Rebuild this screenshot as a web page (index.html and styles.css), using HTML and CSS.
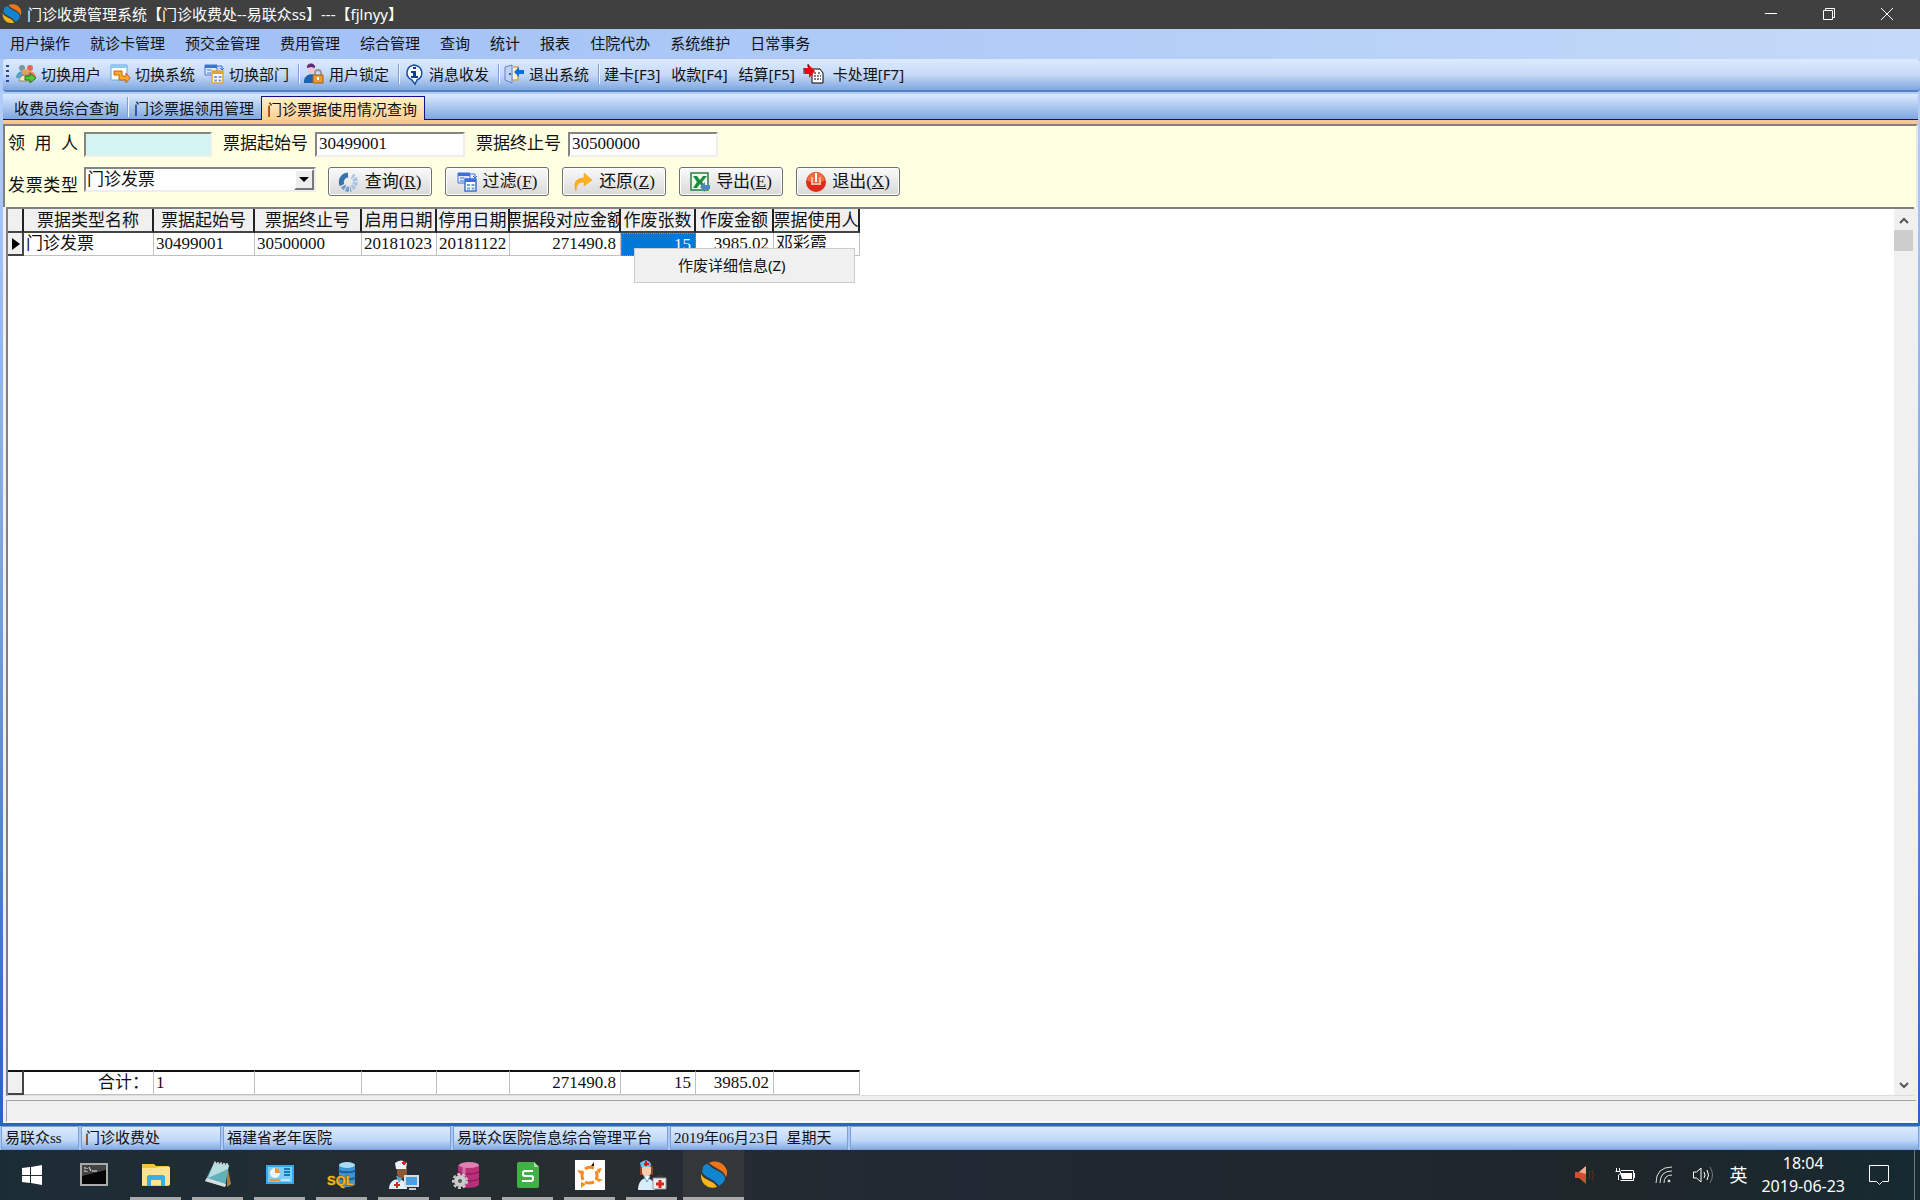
FILE: index.html
```html
<!DOCTYPE html>
<html lang="zh-CN">
<head>
	<meta charset="utf-8">
	<title>门诊收费管理系统</title>
	<link rel="stylesheet" href="styles.css">
</head>
<body>
	<!-- 公用图标 -->
	<svg class="defs" width="0" height="0">
		<symbol id="logo" viewBox="0 0 28 28">
			<path d="M9 2C14-1 24 0 27 10c0 3 0 4-1 6C24 9 16 8 9 2z" fill="#ee7415"/>
			<path d="M3 6C4 4 6 3 8 3c5 7 15 6 17 14 0 3-3 6-6 8C15 18 5 17 2 11z" fill="#1185d0"/>
			<path d="M1 13c3 7 13 6 16 13C9 29 0 23 1 13z" fill="#f5b517"/>
		</symbol>
		<symbol id="calendar" viewBox="0 0 20 20">
			<path d="M1 1h12v10H1z" fill="#dce9ff" stroke="#4474d6"/>
			<path d="M1 1h12v3H1z" fill="#3d6fd8"/>
			<path d="M3 6h4M3 9h4" stroke="#4474d6"/>
			<path d="M14 2h4v3m-2-1l2 2 2-2" fill="none" stroke="#3d6fd8"/>
			<path d="M8 7h11v12H8z" fill="#fff" stroke="currentColor" stroke-width="1.5"/>
			<path d="M8 7h11v3H8z" fill="currentColor"/>
			<path d="M10 12h3v2h-3zM14.500 12h3v2h-3zM10 15.500h3v2h-3zM14.500 15.500h3v2h-3z" fill="#6f9be8"/>
		</symbol>
	</svg>

	<header class="titlebar">
		<svg class="title_icon"><use href="#logo"/></svg>
		<h1>门诊收费管理系统【门诊收费处--易联众ss】---【fjlnyy】</h1>
		<div class="win_btns">
			<button type="button" aria-label="最小化"><svg width="12" height="12"><path d="M0 5.500h12"/></svg></button>
			<button type="button" aria-label="还原"><svg width="12" height="12"><path d="M.5 2.500h9v9h-9zM2.500 2.500v-2h9v9h-2"/></svg></button>
			<button type="button" aria-label="关闭"><svg width="12" height="12"><path d="M0 0l12 12M12 0L0 12"/></svg></button>
		</div>
	</header>

	<nav class="menubar">
		<button type="button">用户操作</button>
		<button type="button">就诊卡管理</button>
		<button type="button">预交金管理</button>
		<button type="button">费用管理</button>
		<button type="button">综合管理</button>
		<button type="button">查询</button>
		<button type="button">统计</button>
		<button type="button">报表</button>
		<button type="button">住院代办</button>
		<button type="button">系统维护</button>
		<button type="button">日常事务</button>
	</nav>

	<div class="toolbar">
		<span class="grip"></span>
		<button type="button">
			<svg viewBox="0 0 20 20"><circle cx="6" cy="4" r="3" fill="#7e93a8"/><path d="M0 14c0-9 12-9 12 0z" fill="#5aa3c8"/><circle cx="14" cy="4" r="3" fill="#e2694f"/><path d="M8 14c0-9 12-9 12 0z" fill="#f08068"/><circle cx="9" cy="8" r="3" fill="#e5a35c"/><path d="M3 17c1-8 11-8 12 0z" fill="#f7e6cb" stroke="#99845e"/><path d="M9 12h5V9l6 5-6 5v-3H9z" fill="#54c832" stroke="#24731b"/></svg>
			切换用户</button>
		<button type="button">
			<svg viewBox="0 0 20 20"><path d="M1 1h16v15H1z" fill="#fff" stroke="#64a7de"/><path d="M1 1h16v3H1z" fill="#8ccaf0"/><path d="M4 7h8v5h4V9l4 5-4 5v-3H9v-5H4z" fill="#ffa928" stroke="#c86412"/></svg>
			切换系统</button>
		<button type="button">
			<svg class="orange"><use href="#calendar"/></svg>
			切换部门</button>
		<span class="sep"></span>
		<button type="button">
			<svg viewBox="0 0 20 20"><path d="M4 3c0-4 7-4 7 0v4c0 3-7 3-7 0z" fill="#ecc6d8"/><path d="M3 4c-1-6 9-6 8 0L7 3z" fill="#5c2d70"/><path d="M0 18c0-10 14-10 15-1v2H0z" fill="#1c63ae"/><path d="M11 12V9c0-4 6-4 6 0v3" fill="none" stroke="#999" stroke-width="2"/><path d="M9 11h10v8H9z" fill="#e99b32" stroke="#a9600f"/><path d="M13 13h2v3h-2z" fill="#fff"/></svg>
			用户锁定</button>
		<span class="sep"></span>
		<button type="button">
			<svg viewBox="0 0 20 20"><path d="M10 1a9 8 0 0 1 3 15l-2 4-3-4A9 8 0 0 1 10 1z" fill="#fff" stroke="#1450a4" stroke-width="1.500"/><path d="M9 3h3v2H9zM7 7h5v5h2v2H7v-2h2V9H7z" fill="#0b3f91"/></svg>
			消息收发</button>
		<span class="sep"></span>
		<button type="button">
			<svg viewBox="0 0 20 20"><path d="M9 3h5v13H9" fill="#fff3c9" stroke="#d1a55f" stroke-width="1.500"/><path d="M1 3l7-2v18l-7-3z" fill="#bfd3f6" stroke="#6c80bf"/><circle cx="6" cy="10" r="1" fill="#345"/><path d="M10 8l5-5v3h5v4h-5v3z" fill="#0b6fd5"/></svg>
			退出系统</button>
		<span class="sep"></span>
		<button type="button" class="plain">建卡[F3]</button>
		<button type="button" class="plain">收款[F4]</button>
		<button type="button">结算[F5]</button>
		<button type="button" class="last">
			<svg viewBox="0 0 20 20"><path d="M8 5h8l3 4v10H8z" fill="#fff" stroke="#000"/><path d="M10 9h2m2 0h2M10 12h7M10 15h7" stroke="#000" stroke-dasharray="2 1"/><path d="M0 4h4V0l7 7-6 7v-4H1z" fill="#f00010"/><path d="M0 4v6M4 0v3" stroke="#222"/></svg>
			卡处理[F7]</button>
	</div>

	<main class="workspace">
		<div class="tabs" role="tablist">
			<button type="button" role="tab">收费员综合查询</button>
			<span class="sep"></span>
			<button type="button" role="tab">门诊票据领用管理</button>
			<button type="button" role="tab" class="tab_on" aria-selected="true">门诊票据使用情况查询</button>
		</div>

		<section class="pane">
			<form class="filter">
				<div class="row">
					<label class="caption" for="owner">领 用 人</label>
					<input class="owner" id="owner" type="text">
					<label for="start">票据起始号</label>
					<input id="start" type="text" value="30499001">
					<label for="end">票据终止号</label>
					<input id="end" type="text" value="30500000">
				</div>
				<div class="row row_btns">
					<label class="caption" for="kind">发票类型</label>
					<div class="combo">
						<select id="kind"><option>门诊发票</option></select>
						<span class="combo_arrow"></span>
					</div>
					<button type="button">
						<svg viewBox="0 0 20 20" fill="none" stroke-width="5"><path d="M9 3a7 7 0 0 0-6 10" stroke="#3672ab"/><path d="M4 14a7 7 0 0 0 8 3" stroke="#6f9fd0" stroke-dasharray="3 1"/><path d="M13 16a7 7 0 0 0 0-12" stroke="#a9c4e8" stroke-dasharray="3 1"/></svg>
						<span>查询(<u>R</u>)</span></button>
					<button type="button">
						<svg class="blue"><use href="#calendar"/></svg>
						<span>过滤(<u>F</u>)</span></button>
					<button type="button">
						<svg viewBox="0 0 20 20"><path d="M3 19C0 11 3 6 11 6V1l8 7-8 6v-4c-5 0-8 3-8 9z" fill="#fbb21c" stroke="#e79b12" stroke-width=".5"/></svg>
						<span>还原(<u>Z</u>)</span></button>
					<button type="button">
						<svg viewBox="0 0 20 20"><path d="M1 1h17v17H1z" fill="#eef8ee" stroke="#2e7b42" stroke-width="1.500"/><path d="M3 4h4l3 4 3-4h4l-5 6 5 6h-4l-3-4-3 4H3l4-6z" fill="#1f8a3b"/><path d="M10 15l5-5v3h5v4h-5v3z" fill="#4c86c6"/></svg>
						<span>导出(<u>E</u>)</span></button>
					<button type="button">
						<svg viewBox="0 0 20 20"><circle cx="10" cy="10" r="10" fill="#dc2a16"/><path d="M1 8c2-11 16-11 18 0-4 4-14 4-18 0z" fill="#f26a3c"/><path d="M6 5v7h8V5" fill="none" stroke="#ffb9a0" stroke-width="2"/><path d="M10 1v9" stroke="#fff" stroke-width="2"/></svg>
						<span>退出(<u>X</u>)</span></button>
				</div>
			</form>

			<div class="grid_box">
				<div class="grid_body">
					<table class="grid">
						<colgroup><col class="c_mark"><col class="c_type"><col class="c_start"><col class="c_end"><col class="c_on"><col class="c_off"><col class="c_sum"><col class="c_count"><col class="c_void"><col class="c_user"></colgroup>
						<thead>
							<tr>
								<th></th>
								<th><div>票据类型名称</div></th>
								<th><div>票据起始号</div></th>
								<th><div>票据终止号</div></th>
								<th><div>启用日期</div></th>
								<th><div>停用日期</div></th>
								<th><div>票据段对应金额</div></th>
								<th><div>作废张数</div></th>
								<th><div>作废金额</div></th>
								<th><div>票据使用人</div></th>
							</tr>
						</thead>
						<tbody>
							<tr>
								<td class="mark"><svg width="8" height="12"><path d="M0 0l8 6-8 6z"/></svg></td>
								<td>门诊发票</td>
								<td>30499001</td>
								<td>30500000</td>
								<td>20181023</td>
								<td>20181122</td>
								<td class="num">271490.8</td>
								<td class="num cell_on">15
									<div class="popup" role="menu"><button type="button" role="menuitem">作废详细信息(Z)</button></div>
								</td>
								<td class="num">3985.02</td>
								<td>邓彩霞</td>
							</tr>
						</tbody>
					</table>
					<table class="grid grid_total">
						<colgroup><col class="c_mark"><col class="c_type"><col class="c_start"><col class="c_end"><col class="c_on"><col class="c_off"><col class="c_sum"><col class="c_count"><col class="c_void"><col class="c_user"></colgroup>
						<tbody>
							<tr>
								<td class="mark"></td>
								<td class="num">合计：</td>
								<td>1</td>
								<td></td>
								<td></td>
								<td></td>
								<td class="num">271490.8</td>
								<td class="num">15</td>
								<td class="num">3985.02</td>
								<td></td>
							</tr>
						</tbody>
					</table>
				</div>
				<div class="scroll">
					<svg width="10" height="7"><path d="M1 6l4-4 4 4"/></svg>
					<span class="thumb"></span>
					<svg class="down" width="10" height="7"><path d="M1 1l4 4 4-4"/></svg>
				</div>
			</div>
			<div class="hint"></div>
		</section>
	</main>

	<footer class="status">
		<span class="st_user">易联众ss</span>
		<span class="st_dept">门诊收费处</span>
		<span class="st_hosp">福建省老年医院</span>
		<span class="st_sys">易联众医院信息综合管理平台</span>
		<span class="st_date">2019年06月23日&nbsp; 星期天</span>
		<span class="st_rest"></span>
	</footer>

	<div class="taskbar">
		<button type="button" aria-label="开始"><svg width="20" height="20" fill="#fff"><path d="M0 3l8-1v8H0zM9 2l11-2v10H9zM0 11h8v7l-8-1zM9 11h11v9L9 18z"/></svg></button>
		<button type="button" aria-label="命令提示符"><svg width="28" height="24"><path d="M1 1h26v21H1z" fill="#050505" stroke="#aaa" stroke-width="2"/><path d="M2 2h24v5L2 13z" fill="#444"/><path d="M4 5h2M4 8h2M7 5v1M7 8v1M9 4l2 4M12 8h5" stroke="#eee"/></svg></button>
		<button type="button" class="run" aria-label="资源管理器"><svg width="28" height="24"><path d="M0 1h12l2 2h13v20H0z" fill="#f6c33c"/><path d="M0 5h14l2-1h12v18H0z" fill="#ffe392"/><path d="M5 23V14q0-2 2-2h14q2 0 2 2v9h-4v-6H9v6z" fill="#3baee5"/></svg></button>
		<button type="button" class="run" aria-label="记事本"><svg width="28" height="28"><path d="M23 3l4 20-4 3z" fill="#a47d45"/><path d="M10 2l15 2-4 22L1 20z" fill="#62b2bd"/><path d="M10 2l15 2-1 4L4 17z" fill="#b8dde0"/><path d="M1 20l20 6 1-3L3 17z" fill="#ddd"/><path d="M10 2l15 2" stroke="#ccc" stroke-width="3" stroke-dasharray="2 1"/></svg></button>
		<button type="button" class="run" aria-label="控制面板"><svg width="28" height="20"><path d="M0 0h28v19H0z" fill="#37a8ea"/><path d="M2 2h24v15H2z" fill="#7ccdf8"/><circle cx="9" cy="8" r="5" fill="#e9f8ff"/><path d="M9 8V3a5 5 0 0 1 5 5z" fill="#f3952b"/><path d="M18 4h6M18 7h6M18 10h6" stroke="#1677bd" stroke-width="2"/><path d="M4 15h10" stroke="#f3952b" stroke-width="2"/><path d="M15 15h9" stroke="#fff"/></svg></button>
		<button type="button" class="run" aria-label="SQL"><svg width="30" height="28"><path d="M12 4v19c0 4 16 4 16 0V4z" fill="#3f93d2"/><path d="M12 9c0 3 16 3 16 0M12 16c0 3 16 3 16 0" fill="none" stroke="#1a5c96" stroke-width="2"/><ellipse cx="20" cy="4" rx="8" ry="3" fill="#a6dcf5"/><text x="0" y="24" class="sql">SQL</text></svg></button>
		<button type="button" class="run" aria-label="医生工作站"><svg width="30" height="30"><path d="M0 29c0-13 18-13 18 0z" fill="#e4f0f7"/><path d="M7 16l3 7 4-6z" fill="#5aa9dd"/><path d="M8 8h10v5c0 7-10 7-10 0z" fill="#8b5a36"/><path d="M6 3q6-5 12 0l-1 6H7z" fill="#edf3f8"/><path d="M13 3h4m-2-2v4M5 25h6m-3-3v6" stroke="#d22" stroke-width="2"/><path d="M16 16h13v10H16z" fill="#4a9de0" stroke="#d7dde2" stroke-width="2"/><path d="M20 29h7" stroke="#ccc" stroke-width="2"/></svg></button>
		<button type="button" class="run" aria-label="数据库配置"><svg width="28" height="28"><path d="M6 4v19c0 5 21 5 21 0V4z" fill="#b92f7a"/><path d="M6 10c0 4 21 4 21 0M6 17c0 4 21 4 21 0" fill="none" stroke="#7b174d"/><path d="M12 6v20" stroke="#dd6fa9" stroke-width="3"/><ellipse cx="17" cy="4" rx="10" ry="3" fill="#df81b2"/><circle cx="8" cy="20" r="6" fill="#ccc"/><circle cx="8" cy="20" r="7" fill="none" stroke="#ccc" stroke-width="2" stroke-dasharray="3 2"/><circle cx="8" cy="20" r="2" fill="#555"/></svg></button>
		<button type="button" class="run" aria-label="表格"><svg width="22" height="26"><path d="M2 0h15l5 5v19q0 2-2 2H2q-2 0-2-2V2q0-2 2-2z" fill="#41b045"/><path d="M17 0l5 5h-5z" fill="#a6dda6"/><path d="M16 9H8q-2 0-2 2v1q0 2 2 2h6q2 0 2 2v1q0 2-2 2H5" fill="none" stroke="#fff" stroke-width="2"/></svg></button>
		<button type="button" class="run" aria-label="工具"><svg width="30" height="30"><path d="M0 0h30v30H0z" fill="#fff"/><g fill="none" stroke="#f58a1f" stroke-width="3"><path d="M10 9q4-3 9-1M21 11q2 5 0 9M19 22q-5 2-9 0M8 20q-2-5 0-9"/></g><path d="M2 10l6 1-3 3zM22 18l6 2-5 2zM6 22l5 2-5 4zM22 9l5-1-3 6z" fill="#f58a1f"/><path d="M16 6l3-4v4z" fill="#111"/></svg></button>
		<button type="button" class="run" aria-label="护士工作站"><svg width="30" height="30"><path d="M1 30c0-16 17-16 17 0z" fill="#d9ecfa"/><path d="M7 16l3 6 3-6" fill="#fff" stroke="#5ba2d8"/><path d="M3 8c0-5 13-5 13 0v7H3z" fill="#8f4423"/><path d="M5 8c0-4 9-4 9 0v4c0 6-9 6-9 0z" fill="#f8cfae"/><path d="M3 3q7-6 11 1l-1 3H4z" fill="#7fb8e8"/><path d="M7 4h5M9 1v5" stroke="#d11" stroke-width="2"/><path d="M16 18h13v11H16z" fill="#eee" stroke="#999"/><path d="M20 18v-2h6v2" fill="none" stroke="#444"/><path d="M19 24h8M23 20v8" stroke="#d22" stroke-width="3"/></svg></button>
		<button type="button" class="run run_on" aria-label="门诊收费管理系统"><svg width="28" height="28"><use href="#logo"/></svg></button>

		<div class="tray">
			<svg width="20" height="20"><path d="M0 7h4l7-6v18l-7-6H0z" fill="#cf4f32"/><path d="M4 7l7-6v8z" fill="#efa893"/><path d="M14 6q2 4 0 8M17 5q3 5 0 10" fill="none" stroke="#6a2a1b"/></svg>
			<svg width="20" height="14"><path d="M5 5h12v6H7z" fill="#fff"/><path d="M6 2.500h12.500v10H5.500M19.500 5v5M1.500 0v3M4.500 0v3M.5 3.500h5v2l-2 1.500v5" fill="none" stroke="#fff"/></svg>
			<svg width="18" height="18" fill="none" stroke="#ddd"><path d="M1 17Q1 1 17 1M5 17Q5 5 17 5M9 17Q9 9 17 9"/><circle cx="14" cy="15" r="1" fill="#fff"/></svg>
			<svg width="20" height="18" fill="none" stroke="#fff"><path d="M.5 6h3L8 2v14l-4.500-4H.5zM11 6q2 3 0 6M14 4q3 5 0 10"/><path d="M17 1q5 8 0 16" stroke="#777"/></svg>
			<span class="ime">英</span>
			<div class="clock"><time>18:04</time><time>2019-06-23</time></div>
			<svg class="notice" width="20" height="20"><path d="M.5.5h19v16h-6l-3 3-3-3h-7z" fill="none" stroke="#fff"/></svg>
		</div>
	</div>
</body>
</html>
```
FILE: styles.css
```css
*{
	box-sizing: border-box;
}
body{
	margin: 0;
	height: 100vh;
	display: flex;
	flex-direction: column;
	overflow: hidden;
	background: linear-gradient(#a8c5f7, #b0cdfa 10%, #7ea5e6 45%, #2c62c9 93%);
	font-family: "Noto Sans", "Noto Sans CJK SC", sans-serif;
	font-size: 15px;
	line-height: 20px;
	color: #111;
}
button, input, select{
	font: inherit;
	color: inherit;
	border: 0;
	padding: 0;
	background: none;
	white-space: nowrap;
}
svg{
	flex: none;
	overflow: visible;
}
.defs{
	position: absolute;
}

/* 标题栏 */
.titlebar{
	flex: none;
	height: 29px;
	display: flex;
	align-items: center;
	padding: 0 4px 2px 2px;
	background: #404040;
	color: #fff;
}
.title_icon{
	width: 20px;
	height: 20px;
}
.titlebar h1{
	margin: 0 auto 0 5px;
	font-size: 15px;
	font-weight: normal;
}
.win_btns{
	display: flex;
}
.win_btns button{
	width: 58px;
	height: 27px;
	display: flex;
	align-items: center;
	justify-content: center;
}
.win_btns path{
	fill: none;
	stroke: #fff;
}

/* 菜单和工具栏 */
.menubar{
	flex: none;
	height: 30px;
	display: flex;
	align-items: center;
	gap: 20px;
	padding: 0 0 2px 10px;
	background: linear-gradient(90deg, #9dbdf5, #c4daf8);
}
.toolbar{
	flex: none;
	height: 33px;
	display: flex;
	align-items: center;
	margin-left: 3px;
	padding: 0 0 2px 3px;
	border-bottom: 2px solid #5580bd;
	border-radius: 4px;
	background: linear-gradient(#dceaff, #c6daf7 50%, #7fa7e1);
}
.grip{
	width: 3px;
	height: 18px;
	margin-right: 7px;
	background: repeating-linear-gradient(#27479a 0 2px, transparent 2px 5px);
}
.toolbar button{
	display: flex;
	align-items: center;
	gap: 5px;
	margin-right: 9px;
}
.toolbar button.plain{
	margin-right: 11px;
}
.toolbar svg{
	width: 20px;
	height: 20px;
}
.toolbar .last{
	gap: 9px;
}
.orange{
	color: #e8a13a;
}
.blue{
	color: #3d6fd8;
}
.sep{
	width: 2px;
	height: 20px;
	margin-right: 4px;
	border-left: 1px solid #7d9fd8;
	background: #f0f6ff;
}

/* 页签 */
.workspace{
	flex: 1;
	min-height: 0;
	display: flex;
	flex-direction: column;
	padding: 2px 2px 3px 3px;
}
.tabs{
	flex: none;
	height: 26px;
	display: flex;
	align-items: flex-end;
	padding-left: 11px;
	border-bottom: 1px solid #10108a;
	background: linear-gradient(#dceaff, #7fa7e1);
}
.tabs button{
	height: 22px;
	line-height: 22px;
}
.tabs .sep{
	margin: 0 5px 2px 8px;
}
.tabs .tab_on{
	height: 24px;
	margin: 0 0 -1px 7px;
	padding: 0 7px 0 5px;
	border: 1px solid #10108a;
	border-bottom: 0;
	background: linear-gradient(#fff0cc, #ffd096);
}

/* 查询条件 */
.pane{
	flex: 1;
	min-height: 0;
	display: flex;
	flex-direction: column;
	border-top: 4px solid #f6c795;
	background: #f0f0f0;
	font-family: "Liberation Serif", "Noto Sans CJK SC", serif;
	font-size: 17px;
}
.filter{
	padding: 5px 2px 11px 3px;
	border: 2px solid #808080;
	border-right-color: #e8e8e8;
	border-bottom: 0;
	background: #ffffe1;
}
.row{
	display: flex;
	align-items: center;
	height: 26px;
}
.row_btns{
	height: 29px;
	margin-top: 10px;
}
.row label{
	flex: none;
	width: 87px;
	margin: 0 5px 0 11px;
}
.row .caption{
	width: 70px;
	margin: 0 6px 0 0;
	text-align-last: justify;
}
.row_btns .caption{
	align-self: flex-end;
}
.row input, .combo{
	height: 25px;
	border: 2px solid #858585;
	border-right-color: #eee;
	border-bottom-color: #eee;
	background: #fff;
}
.row input{
	width: 150px;
	padding-left: 2px;
}
.row input.owner{
	width: 128px;
	background: #d2f4f2;
}
.combo{
	position: relative;
	align-self: flex-start;
	width: 232px;
	margin-right: 12px;
}
.combo select{
	display: block;
	width: 100%;
	height: 21px;
	padding-left: 1px;
	appearance: none;
}
.combo_arrow{
	position: absolute;
	top: 0;
	right: 0;
	width: 20px;
	height: 21px;
	border: 2px solid #fff;
	border-right-color: #777;
	border-bottom-color: #777;
	background: #eee;
	pointer-events: none;
}
.combo_arrow::after{
	content: "";
	display: block;
	margin: 6px 3px;
	border: 5px solid transparent;
	border-top-color: #000;
}
.row_btns button{
	display: flex;
	align-items: center;
	justify-content: center;
	gap: 6px;
	width: 104px;
	height: 29px;
	margin-right: 13px;
	border: 1px solid #707070;
	border-radius: 3px;
	background: linear-gradient(#fafafa, #d9d9d9);
	box-shadow: inset 0 0 0 1px #fff;
}
.row_btns svg{
	width: 20px;
	height: 20px;
}

/* 表格 */
.grid_box{
	flex: 1;
	min-height: 0;
	display: flex;
	margin: 0 4px 0 3px;
	border: 2px solid #808080;
	border-right: 0;
	border-bottom: 1px solid #ddd;
	background: #fff;
}
.grid_body{
	flex: 1;
	display: flex;
	flex-direction: column;
	justify-content: space-between;
}
.grid{
	width: 852px;
	table-layout: fixed;
	border-collapse: separate;
	border-spacing: 0;
}
.c_mark{ width: 16px; }
.c_type{ width: 130px; }
.c_start{ width: 101px; }
.c_end{ width: 107px; }
.c_on, .c_count{ width: 75px; }
.c_off{ width: 73px; }
.c_sum{ width: 111px; }
.c_void{ width: 78px; }
.c_user{ width: 86px; }
.grid th{
	height: 24px;
	padding: 2px 0 0;
	border-right: 2px solid #222;
	border-bottom: 2px solid #444;
	background: #f0f0f0;
	font-weight: normal;
}
.grid th div{
	display: flex;
	justify-content: center;
	overflow: hidden;
	white-space: nowrap;
}
.grid td{
	height: 23px;
	padding: 0 0 0 2px;
	border-right: 1px solid #c0c0c0;
	border-bottom: 1px solid #c0c0c0;
	white-space: nowrap;
}
.grid .num{
	padding-right: 4px;
	text-align: right;
}
.grid .mark{
	padding-left: 4px;
	border-right: 2px solid #444;
	border-bottom: 2px solid #444;
	background: #f0f0f0;
}
.grid .mark svg{
	display: block;
}
.grid .cell_on{
	position: relative;
	border: 1px dotted #e8801c;
	background: #0078d7;
	color: #fff;
}
.grid_total td{
	height: 25px;
	border-top: 2px solid #111;
}
.popup{
	position: absolute;
	top: 14px;
	left: 12px;
	z-index: 1;
	width: 221px;
	border: 1px solid #ccc;
	background: #f0f0f0;
	color: #111;
}
.popup button{
	display: block;
	width: 100%;
	height: 33px;
	padding: 0 0 2px 43px;
	text-align: left;
	font-family: "Noto Sans", "Noto Sans CJK SC", sans-serif;
	font-size: 15px;
}
.scroll{
	width: 20px;
	display: flex;
	flex-direction: column;
	align-items: center;
	padding: 8px 1px 6px 0;
	background: #f0f0f0;
}
.scroll path{
	fill: none;
	stroke: #555;
	stroke-width: 2;
}
.thumb{
	width: 100%;
	height: 21px;
	margin: 6px 0 auto;
	background: #cdcdcd;
}
.hint{
	flex: none;
	height: 22px;
	margin: 4px 2px 1px 3px;
	border: 1px solid #a0a0a0;
	border-right: 0;
	border-bottom-color: #fff;
}

/* 状态栏 */
.status{
	flex: none;
	height: 24px;
	display: flex;
	gap: 2px;
	padding: 0 1px;
	background: #a9c8f5;
	font-family: "Liberation Serif", "Noto Sans CJK SC", serif;
}
.status span{
	height: 24px;
	padding-left: 3px;
	border: 1px solid #7d9fd3;
	background: linear-gradient(#dceaff, #c0d8f8 60%, #86ade4);
	line-height: 22px;
	white-space: nowrap;
}
.st_user{ width: 78px; }
.st_dept{ width: 140px; }
.st_hosp{ width: 228px; }
.st_sys{ width: 215px; }
.st_date{ width: 178px; }
.st_rest{ flex: 1; }

/* 任务栏 */
.taskbar{
	flex: none;
	height: 50px;
	display: flex;
	gap: 11px;
	padding: 0 5px 0 6px;
	background: linear-gradient(90deg, #1c2c36, #272d30 30%, #222833 50%, #1e262a 85%, #172a31);
	color: #fff;
}
.taskbar button{
	width: 51px;
	display: flex;
	align-items: center;
	justify-content: center;
	padding-top: 2px;
	border-bottom: 3px solid transparent;
}
.taskbar .run{
	border-bottom-color: #aaa;
}
.taskbar .run_on{
	width: 61px;
	margin-left: -5px;
	background: #34373a;
}
.sql{
	fill: #f5b51c;
	stroke: #8a5b05;
	stroke-width: 1px;
	paint-order: stroke;
	font: bold 13px "Liberation Sans", sans-serif;
}
.tray{
	display: flex;
	align-items: center;
	gap: 20px;
	margin-left: auto;
	padding-right: 25px;
	border-right: 1px solid #6b757a;
}
.ime{
	margin-left: -4px;
	margin-right: -6px;
	font-size: 18px;
}
.clock{
	display: flex;
	flex-direction: column;
	align-items: center;
	font-size: 16px;
	line-height: 23px;
}
.notice{
	margin-left: 4px;
}
```
